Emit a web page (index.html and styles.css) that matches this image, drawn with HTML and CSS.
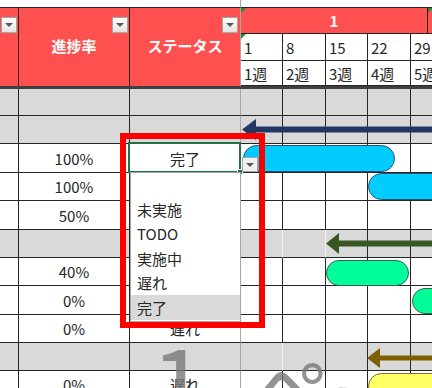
FILE: index.html
```html
<!DOCTYPE html>
<html lang="ja">
<head>
<meta charset="utf-8">
<title>Gantt</title>
<link rel="stylesheet" href="styles.css">
</head>
<body>
<div class="sheet">
  <div class="strip-left"></div>
  <div class="strip-right"></div>

  <div class="hd hd-a"><span class="fbtn"></span></div>
  <div class="hd hd-b">進捗率<span class="fbtn"></span></div>
  <div class="hd hd-c">ステータス<span class="fbtn"></span></div>

  <div class="months">
    <div class="month tri">1</div>
    <div class="month next tri"></div>
  </div>

  <div class="dt tri">1</div>
  <div class="dt">8</div>
  <div class="dt">15</div>
  <div class="dt">22</div>
  <div class="dt">29</div>

  <div class="wk">1週</div>
  <div class="wk">2週</div>
  <div class="wk">3週</div>
  <div class="wk">4週</div>
  <div class="wk">5週</div>

  <div class="thick"></div>

  <div class="row gray"><div></div><div></div><div></div><div></div><div></div><div></div><div></div><div></div></div>
  <div class="row gray"><div></div><div></div><div></div><div></div><div></div><div></div><div></div><div></div></div>
  <div class="row"><div></div><div>100%</div><div>完了</div><div></div><div></div><div></div><div></div><div></div></div>
  <div class="row"><div></div><div>100%</div><div>完了</div><div></div><div></div><div></div><div></div><div></div></div>
  <div class="row"><div></div><div>50%</div><div>実施中</div><div></div><div></div><div></div><div></div><div></div></div>
  <div class="row gray"><div></div><div></div><div></div><div class="lt"></div><div class="lt"></div><div></div><div></div><div></div></div>
  <div class="row"><div></div><div>40%</div><div>実施中</div><div></div><div></div><div></div><div></div><div></div></div>
  <div class="row"><div></div><div>0%</div><div>未実施</div><div></div><div></div><div></div><div></div><div></div></div>
  <div class="row"><div></div><div>0%</div><div>遅れ</div><div></div><div></div><div></div><div></div><div></div></div>
  <div class="row gray"><div></div><div></div><div></div><div class="lt"></div><div></div><div></div><div></div><div></div></div>
  <div class="row"><div></div><div>0%</div><div>遅れ</div><div></div><div></div><div></div><div></div><div></div></div>

  <div class="pagemark pm-num">1</div>
  <div class="pagemark pm-kana">ページ</div>

  <svg class="arrow arrow-navy" width="190" height="21" viewBox="0 0 190 21"><polygon points="0,10.5 14,0 14,21"/><rect x="13" y="7.5" width="177" height="6"/></svg>
  <svg class="arrow arrow-green" width="106" height="21" viewBox="0 0 106 21"><polygon points="0,10.5 13,0 13,21"/><rect x="12" y="7.5" width="94" height="6"/></svg>
  <svg class="arrow arrow-brown" width="65" height="20" viewBox="0 0 65 20"><polygon points="0,10 13,0 13,20"/><rect x="12" y="7.5" width="53" height="5"/></svg>

  <div class="bar bar-blue b1"></div>
  <div class="bar bar-blue b2"></div>
  <div class="bar bar-green g1"></div>
  <div class="bar bar-green g2"></div>
  <div class="bar bar-yellow y1"></div>

  <div class="selected"><span class="handle"></span></div>
  <span class="ddbtn"></span>

  <ul class="list">
    <li>未実施</li>
    <li>TODO</li>
    <li>実施中</li>
    <li>遅れ</li>
    <li class="hl">完了</li>
  </ul>

  <div class="frame"></div>
</div>
</body>
</html>
```

FILE: styles.css
```css
* { box-sizing: border-box; }
html, body { margin: 0; padding: 0; }
body {
  width: 432px;
  height: 388px;
  overflow: hidden;
  background: #fff;
  font-family: "Noto Sans CJK JP", "Noto Sans", sans-serif;
  color: #262626;
}
.sheet {
  position: relative;
  display: grid;
  width: 453px;
  grid-template-columns: 19px 111px 111px 42px 43px 42px 43px 42px;
  grid-template-rows: 7px 27px 27px 25px 3px 27px 28px 29px 28px 29px 28px 28px 29px 28px 28px 28px;
}
.strip-left { grid-column: 1 / 4; grid-row: 1; border-right: 1px solid #a6a6a6; }
.strip-right { grid-column: 4 / -1; grid-row: 1; }

.hd {
  grid-row: 2 / 5;
  position: relative;
  background: #ff5050;
  border-top: 1px solid #262626;
  border-right: 1px solid #262626;
  color: #fff;
  font-weight: bold;
  font-size: 15px;
  display: flex;
  align-items: center;
  justify-content: center;
  padding-bottom: 3px;
}
.hd-a { grid-column: 1; }
.hd-b { grid-column: 2; }
.hd-c { grid-column: 3; border-right-color: #a6a6a6; }

.fbtn {
  position: absolute;
  top: 9px;
  right: 1px;
  width: 16px;
  height: 16px;
  border: 1px solid #a6a6a6;
  background: linear-gradient(#ffffff, #e4e4e4);
  display: flex;
  align-items: center;
  justify-content: center;
}
.hd-c .fbtn { right: 2px; }
.fbtn::after, .ddbtn::after {
  content: "";
  border-left: 4px solid transparent;
  border-right: 4px solid transparent;
  border-top: 4px solid #595959;
}

.months { grid-column: 4 / -1; grid-row: 2; display: flex; }
.month {
  position: relative;
  width: 187px;
  background: #ff5050;
  border-top: 1px solid #262626;
  border-right: 1px solid #262626;
  border-bottom: 1px solid #262626;
  color: #fff;
  font-weight: bold;
  font-size: 15px;
  display: flex;
  align-items: center;
  justify-content: center;
}
.month.next { flex: 1; }
.tri::before {
  content: "";
  position: absolute;
  left: 0;
  top: 0;
  border-top: 5px solid #1e8f3e;
  border-right: 5px solid transparent;
}

.dt, .wk {
  position: relative;
  background: #fff;
  border-right: 1px solid #262626;
  border-bottom: 1px solid #262626;
  font-size: 15px;
  padding-left: 3px;
  display: flex;
  align-items: center;
}
.dt { grid-row: 3; }
.wk { grid-row: 4; }

.thick { grid-column: 1 / -1; grid-row: 5; background: #3f3f3f; }

.row { display: contents; }
.row > div {
  border-right: 1px solid #262626;
  border-bottom: 1px solid #262626;
  display: flex;
  align-items: center;
  justify-content: center;
  font-size: 15px;
  background: #fff;
}
.row > div:nth-child(3) { border-right-color: #a6a6a6; }
.row.gray > div { background: #d9d9d9; }
.row.gray > div.lt { border-right-color: #f2f2f2; }

.pagemark {
  position: absolute;
  z-index: 1;
  line-height: 1;
  white-space: nowrap;
  color: rgba(120, 120, 120, 0.8);
}
.pm-num { left: 151px; top: 330px; font-size: 100px; }
.pm-kana { left: 247px; top: 346px; font-size: 84px; }

.arrow { position: absolute; z-index: 2; }
.arrow-navy { left: 242px; top: 119px; fill: #203864; }
.arrow-green { left: 326px; top: 233px; fill: #385723; }
.arrow-brown { left: 367px; top: 348px; fill: #7f6000; }

.bar { position: absolute; z-index: 2; border-radius: 14px; border: 1px solid; }
.bar-blue { background: #00ccff; border-color: #2f4f6f; }
.bar-green { background: #00ff99; border-color: #3f5f4a; }
.bar-yellow { background: #ffff66; border-color: #7f6a2a; }
.b1 { left: 243px; top: 145px; width: 152px; height: 27px; }
.b2 { left: 368px; top: 173px; width: 90px; height: 27px; }
.g1 { left: 326px; top: 260px; width: 83px; height: 26px; }
.g2 { left: 412px; top: 288px; width: 60px; height: 26px; }
.y1 { left: 368px; top: 373px; width: 90px; height: 27px; }

.selected {
  position: absolute;
  z-index: 3;
  left: 128px;
  top: 142px;
  width: 113px;
  height: 31px;
  border: 2px solid #217346;
}
.handle {
  position: absolute;
  right: -4px;
  bottom: -4px;
  width: 6px;
  height: 6px;
  background: #217346;
  border: 1px solid #fff;
}
.ddbtn {
  position: absolute;
  z-index: 3;
  left: 242px;
  top: 157px;
  width: 16px;
  height: 15px;
  border: 1px solid #a6a6a6;
  background: #f0f0f0;
  display: flex;
  align-items: center;
  justify-content: center;
}

.list {
  position: absolute;
  z-index: 4;
  left: 130px;
  top: 172px;
  width: 111px;
  height: 150px;
  margin: 0;
  padding: 24px 0 0;
  list-style: none;
  background: #fff;
  border: 1px solid #a6a6a6;
}
.list li {
  height: 24.5px;
  padding-left: 6px;
  font-size: 15px;
  display: flex;
  align-items: center;
  color: #262626;
}
.list li.hl { background: #d9d9d9; }

.frame {
  position: absolute;
  z-index: 5;
  left: 120px;
  top: 133px;
  width: 145px;
  height: 195px;
  border: 6px solid #ff0000;
}
```
